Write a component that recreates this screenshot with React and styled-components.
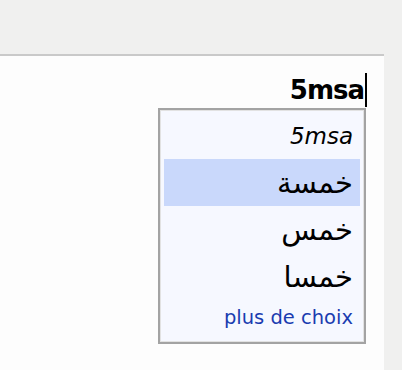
import styled, { createGlobalStyle } from "styled-components";

const GlobalStyle = createGlobalStyle`
    html, body {
        margin: 0;
        padding: 0;
        background: #f0f0ef;
    }
    body {
        font-family: "DejaVu Sans", "Liberation Sans", sans-serif;
    }
`;

const Page = styled.div`
    display: flex;
    flex-direction: column;
    width: 402px;
    height: 370px;
    overflow: hidden;
    background: #f0f0ef;
`;

const TopBar = styled.div`
    height: 54px;
    flex-shrink: 0;
`;

const Main = styled.div`
    display: flex;
    flex-grow: 1;
`;

const Panel = styled.div`
    display: flex;
    flex-direction: column;
    align-items: flex-end;
    width: 384px;
    border-top: 2px solid #c9c9c9;
    background: #fdfdfd;
    padding: 16px 17px 0 0;
    box-sizing: border-box;
`;

const Input = styled.div`
    display: flex;
    align-items: center;
    height: 36px;
    font-size: 26px;
    font-weight: bold;
    letter-spacing: -1px;
    color: #000;
`;

const Caret = styled.span`
    width: 2px;
    height: 34px;
    background: #000;
    margin-left: 1px;
`;

const Dropdown = styled.div`
    display: flex;
    flex-direction: column;
    margin-right: 1px;
    width: 208px;
    height: 236px;
    box-sizing: border-box;
    border: 2px solid #a3a3a3;
    box-shadow: inset 0 0 0 1px #e2e2e2;
    background: #f6f8ff;
    padding: 2px 4px 4px;
`;

const Option = styled.div`
    display: flex;
    align-items: center;
    justify-content: flex-end;
    height: 47px;
    padding-right: 7px;
    font-size: ${p => (p.$latin ? "23px" : "29px")};
    font-style: ${p => (p.$latin ? "italic" : "normal")};
    background: ${p => (p.$active ? "#c9d8fb" : "transparent")};
    color: #000;
`;

const More = styled.div`
    display: flex;
    align-items: center;
    justify-content: flex-end;
    height: 34px;
    padding-right: 7px;
    font-size: 19.5px;
    color: #1a3cb0;
`;

const options = [
    { text: "5msa", latin: true },
    { text: "خمسة", active: true },
    { text: "خمس" },
    { text: "خمسا" },
];

export default function App() {
    return (
        <Page>
            <GlobalStyle />
            <TopBar />
            <Main>
                <Panel>
                    <Input>
                        5msa
                        <Caret />
                    </Input>
                    <Dropdown>
                        {options.map(o => (
                            <Option key={o.text} $latin={o.latin} $active={o.active}>
                                <span dir={o.latin ? "ltr" : "rtl"}>{o.text}</span>
                            </Option>
                        ))}
                        <More>plus de choix</More>
                    </Dropdown>
                </Panel>
            </Main>
        </Page>
    );
}
